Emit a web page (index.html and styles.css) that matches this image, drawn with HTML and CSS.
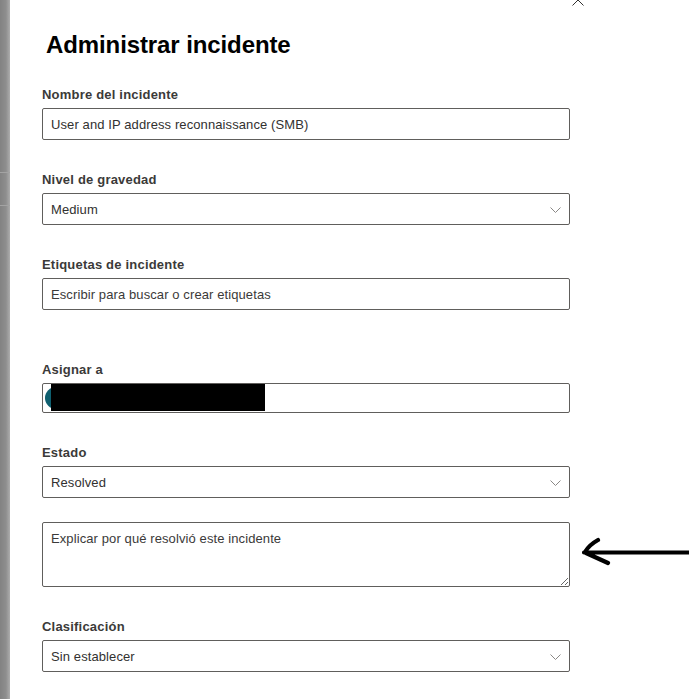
FILE: index.html
```html
<!DOCTYPE html>
<html lang="es">
<head>
    <meta charset="UTF-8">
    <meta name="viewport" content="width=device-width, initial-scale=1.0">
    <title>Administrar incidente</title>
    <link rel="stylesheet" href="styles.css">
</head>
<body>
    <div class="page">
        <div class="backdrop"></div>
        <div class="panel">
            <button class="close-btn" aria-label="Cerrar">
                <svg width="12" height="12" viewBox="0 0 12 12">
                    <path d="M0.5 0.5 L11.5 11.5 M11.5 0.5 L0.5 11.5" stroke="#323130" stroke-width="1" fill="none"/>
                </svg>
            </button>

            <h1>Administrar incidente</h1>

            <div class="field">
                <label for="incident-name">Nombre del incidente</label>
                <input type="text" class="text-input" id="incident-name" value="User and IP address reconnaissance (SMB)">
            </div>

            <div class="field">
                <label for="severity">Nivel de gravedad</label>
                <div class="select-wrap">
                    <select class="text-input" id="severity">
                        <option>Medium</option>
                    </select>
                    <svg class="chevron" width="11" height="6" viewBox="0 0 11 6"><path d="M0.5 0.5 L5.5 5.5 L10.5 0.5" stroke="#8a8886" fill="none"/></svg>
                </div>
            </div>

            <div class="field field-tags">
                <label for="tags">Etiquetas de incidente</label>
                <input type="text" class="text-input" id="tags" placeholder="Escribir para buscar o crear etiquetas">
            </div>

            <div class="field">
                <label>Asignar a</label>
                <div class="text-input assign-box">
                    <span class="avatar"></span>
                    <span class="redacted"></span>
                </div>
            </div>

            <div class="field field-status">
                <label for="status">Estado</label>
                <div class="select-wrap">
                    <select class="text-input" id="status">
                        <option>Resolved</option>
                    </select>
                    <svg class="chevron" width="11" height="6" viewBox="0 0 11 6"><path d="M0.5 0.5 L5.5 5.5 L10.5 0.5" stroke="#8a8886" fill="none"/></svg>
                </div>
            </div>

            <textarea class="text-input resolve-note" placeholder="Explicar por qué resolvió este incidente"></textarea>

            <div class="field">
                <label for="classification">Clasificación</label>
                <div class="select-wrap">
                    <select class="text-input" id="classification">
                        <option>Sin establecer</option>
                    </select>
                    <svg class="chevron" width="11" height="6" viewBox="0 0 11 6"><path d="M0.5 0.5 L5.5 5.5 L10.5 0.5" stroke="#8a8886" fill="none"/></svg>
                </div>
            </div>
        </div>
    </div>

    <svg class="note-arrow" width="109" height="34" viewBox="0 0 109 34">
        <path d="M4 17.5 L109 17.5 M5 17 Q9 10 18 5 M6 18 L28 28" stroke="#000" stroke-width="4.2" stroke-linecap="round" fill="none"/>
    </svg>
</body>
</html>
```

FILE: styles.css
```css
body {
    margin: 0;
    background: #fff;
    font-family: "Liberation Sans", Arial, sans-serif;
    color: #323130;
}
.page {
    display: flex;
    min-height: 699px;
    overflow: hidden;
}
.backdrop {
    width: 10px;
    flex-shrink: 0;
    background:
        linear-gradient(to bottom, transparent 172px, #a3a3a3 172px, #a3a3a3 173px, transparent 173px, transparent 205px, #a3a3a3 205px, #a3a3a3 206px, transparent 206px),
        linear-gradient(to right, #828282, #8e8e8e 60%, #adadad);
}
.panel {
    flex: 1;
    position: relative;
    padding: 31px 0 0 32px;
}
.close-btn {
    position: absolute;
    left: 562px;
    top: -6px;
    width: 12px;
    height: 12px;
    padding: 0;
    border: 0;
    background: none;
    line-height: 0;
}
h1 {
    margin: 0 0 28px 4px;
    font-size: 24px;
    line-height: 28px;
    font-weight: bold;
    letter-spacing: -0.1px;
    color: #000;
}
.field {
    margin-bottom: 32px;
}
.field label {
    display: block;
    font-size: 13px;
    line-height: 16px;
    font-weight: bold;
    letter-spacing: 0.2px;
    margin-bottom: 5px;
    color: #3b3a39;
}
.field-tags {
    margin-bottom: 52px;
}
.field-status {
    margin-bottom: 24px;
}
.text-input {
    display: block;
    box-sizing: border-box;
    width: 528px;
    height: 32px;
    margin: 0;
    padding: 0 8px;
    border: 1px solid #605e5c;
    border-radius: 2px;
    background: #fff;
    font-family: "Liberation Sans", Arial, sans-serif;
    font-size: 13px;
    letter-spacing: 0.1px;
    color: #323130;
    outline: none;
}
.text-input::placeholder {
    color: #3b3a39;
    opacity: 1;
}
select.text-input {
    appearance: none;
    -webkit-appearance: none;
}
.select-wrap {
    position: relative;
    width: 528px;
}
.chevron {
    position: absolute;
    right: 9px;
    top: 14px;
}
.assign-box {
    position: relative;
    height: 30px;
    padding: 0;
    display: flex;
    align-items: center;
}
.avatar {
    width: 22px;
    height: 22px;
    margin-left: 2px;
    border-radius: 50%;
    background: #0f5f6f;
}
.redacted {
    position: absolute;
    left: 8px;
    top: 0;
    width: 214px;
    height: 27px;
    background: #000;
}
.resolve-note {
    height: 65px;
    padding: 6px 8px;
    line-height: 20px;
    margin-bottom: 32px;
    resize: vertical;
}
.note-arrow {
    position: absolute;
    left: 580px;
    top: 535px;
}
```
